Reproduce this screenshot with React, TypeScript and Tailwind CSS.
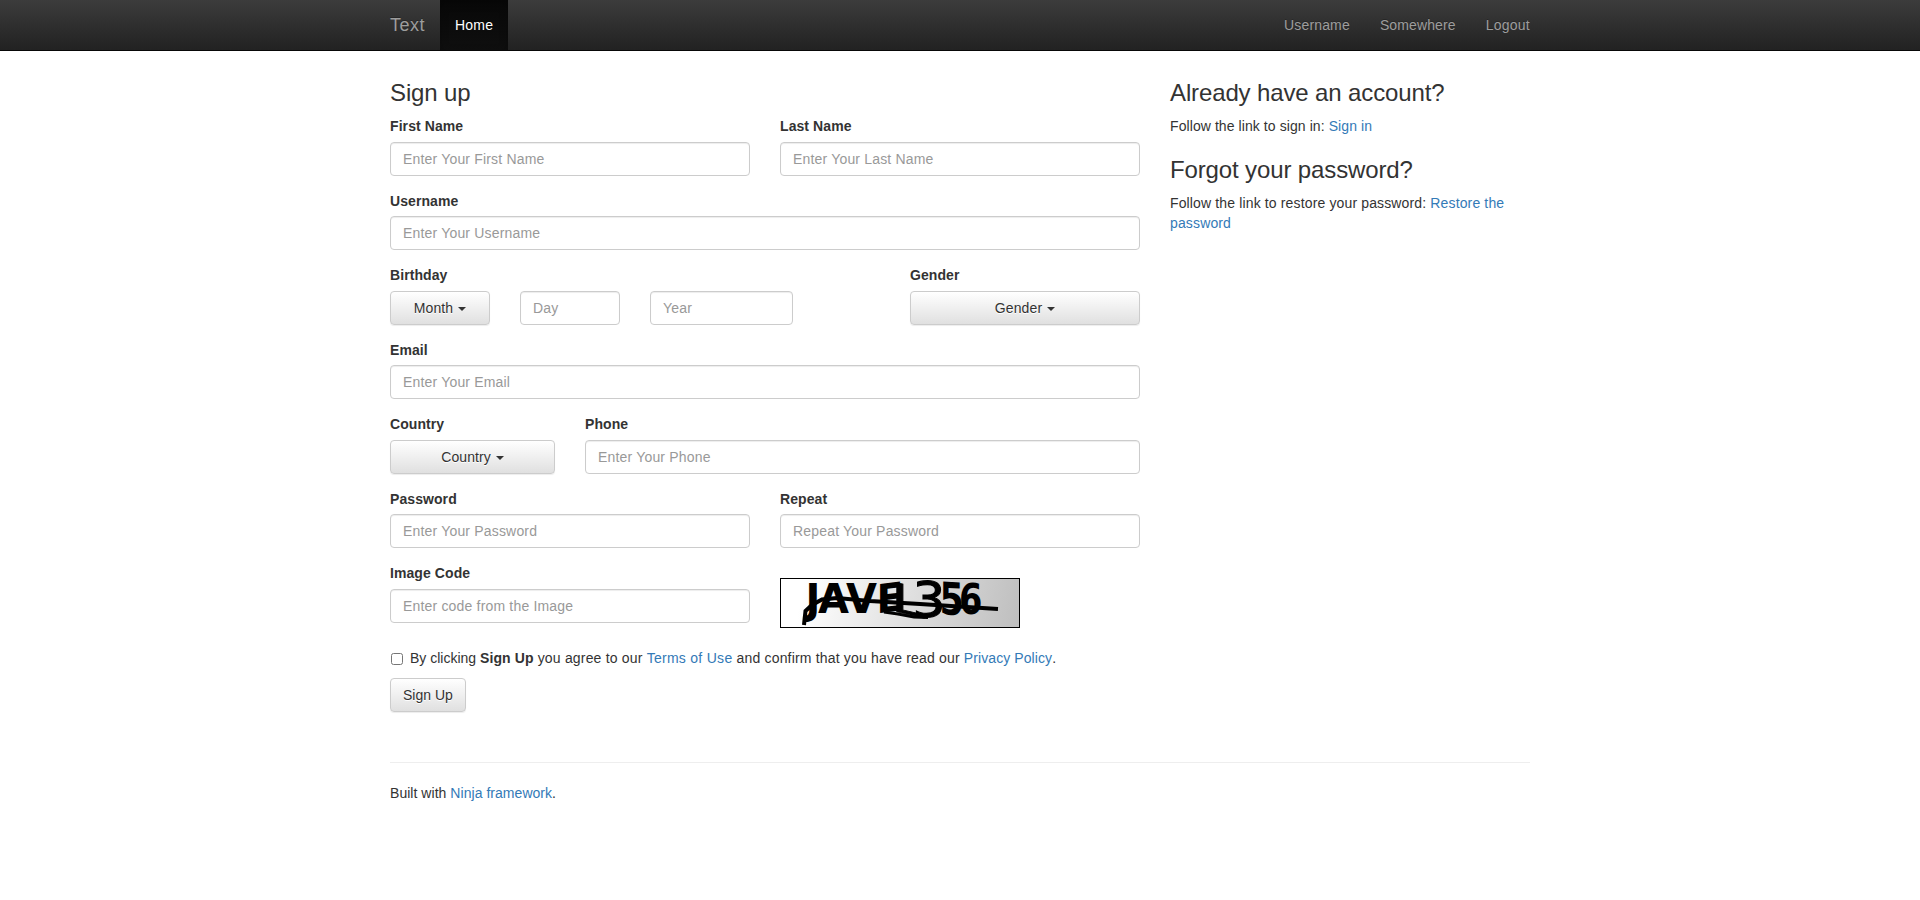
import React from "react";

const links = "text-[#337ab7]";
const heading = "mb-2.5 text-2xl leading-[26.4px] font-medium tracking-[-0.13px]";
const labelStyle = "block h-[25.5px] font-bold tracking-[0.08px]";

function Caret() {
  return (
    <span className="ml-[5px] inline-block h-0 w-0 border-x-4 border-t-4 border-x-transparent border-t-[#333] align-middle" />
  );
}

function Field({ label, placeholder, className = "" }: { label: string; placeholder: string; className?: string }) {
  return (
    <div className={className}>
      <label className={labelStyle}>{label}</label>
      <TextInput placeholder={placeholder} />
    </div>
  );
}

function TextInput({ placeholder }: { placeholder: string }) {
  return (
    <input
      placeholder={placeholder}
      className="block h-[34px] w-full rounded border border-[#ccc] bg-white px-3 py-1.5 leading-5 tracking-[0.18px] shadow-[inset_0_1px_1px_rgba(0,0,0,0.075)] placeholder:text-[#999]"
    />
  );
}

function Button({ children, className = "" }: { children: React.ReactNode; className?: string }) {
  return (
    <button
      className={
        "block h-[34px] rounded border border-[#ccc] bg-linear-to-b from-white to-[#e0e0e0] px-3 py-1.5 text-center leading-5 shadow-[inset_0_1px_0_rgba(255,255,255,0.15),0_1px_1px_rgba(0,0,0,0.075)] [text-shadow:0_1px_0_#fff] " +
        className
      }
    >
      {children}
    </button>
  );
}

function Captcha() {
  return (
    <svg width="240" height="50" viewBox="0 0 240 50" className="block overflow-visible">
      <defs>
        <linearGradient id="shade" x1="0" y1="0" x2="240" y2="50" gradientUnits="userSpaceOnUse">
          <stop offset="0.1" stopColor="#fff" />
          <stop offset="1" stopColor="#bebebe" />
        </linearGradient>
      </defs>
      <rect x="0.5" y="0.5" width="239" height="49" fill="url(#shade)" stroke="#000" />
      <g fontFamily="'DejaVu Sans', sans-serif" fontWeight="700" fontSize="40" fill="#000">
        <text transform="translate(25.5 35)">J</text>
        <text transform="translate(38 35)">A</text>
        <text transform="translate(66 35)">V</text>
        <text transform="translate(96.5 35.5) skewY(-7) scale(.98 1)">E</text>
        <text transform="translate(111 32.5) skewY(13) scale(1.5 1)" fontWeight="400" stroke="#000" strokeWidth="0.8">L</text>
        <text transform="translate(132.5 38.6) scale(1.3 1.24)" fontWeight="400" stroke="#000" strokeWidth="0.9">3</text>
        <text transform="translate(159.5 36) skewY(3) scale(.88 1.12)">5</text>
        <text transform="translate(179 35.5) scale(.84 1.05)">6</text>
      </g>
      <g fill="none" stroke="#000">
        <path d="M24 47 L25.5 33 L32 27 L42 21.5 L57 20 L90 23 L140 26 L218 31" strokeWidth="4" />
        <path d="M25 40 Q29 43 34 36" strokeWidth="4" />
        <path d="M104 34 L118 36 L134 39 L148 39.5" strokeWidth="3" />
      </g>
    </svg>
  );
}

export default function App() {
  return (
    <div className="min-h-[900px] bg-white font-['Liberation_Sans',Arial,sans-serif] text-sm leading-5 text-[#333]">
      <nav className="h-[51px] border-b border-[#080808] bg-linear-to-b from-[#3c3c3c] to-[#222] text-[#9d9d9d] [text-shadow:0_-1px_0_rgba(0,0,0,0.25)]">
        <div className="mx-auto flex h-[50px] w-[1140px] items-center">
          <a className="w-[50px] text-lg leading-5 tracking-[0.5px]">Text</a>
          <a className="h-full w-[68px] bg-linear-to-b from-[#080808] to-[#0f0f0f] px-[15px] py-[15px] tracking-[0.2px] text-white shadow-[inset_0_3px_9px_rgba(0,0,0,0.25)]">
            Home
          </a>
          <div className="ml-auto flex gap-[30px]">
            <a className="tracking-[0.15px]">Username</a>
            <a className="tracking-[0.12px]">Somewhere</a>
            <a className="tracking-[0.25px]">Logout</a>
          </div>
        </div>
      </nav>

      <div className="mx-auto w-[1140px] pt-[29px]">
        <div className="flex gap-[30px]">
          <main className="w-[750px]">
            <h3 className={heading}>Sign up</h3>
            <form className="flex flex-col gap-[15px]">
              <div className="grid grid-cols-2 gap-[30px]">
                <Field label="First Name" placeholder="Enter Your First Name" />
                <Field label="Last Name" placeholder="Enter Your Last Name" />
              </div>
              <Field label="Username" placeholder="Enter Your Username" />
              <div className="flex justify-between">
                <div>
                  <label className={labelStyle}>Birthday</label>
                  <div className="flex gap-[30px]">
                    <Button className="w-[100px] tracking-[0.1px]">Month<Caret /></Button>
                    <div className="w-[100px]"><TextInput placeholder="Day" /></div>
                    <div className="w-[143.33px]"><TextInput placeholder="Year" /></div>
                  </div>
                </div>
                <div className="w-[230px]">
                  <label className={labelStyle}>Gender</label>
                  <Button className="w-full tracking-[0.1px]">Gender<Caret /></Button>
                </div>
              </div>
              <Field label="Email" placeholder="Enter Your Email" />
              <div className="flex gap-[30px]">
                <div className="w-[165px]">
                  <label className={labelStyle}>Country</label>
                  <Button className="w-full tracking-[0.05px]">Country<Caret /></Button>
                </div>
                <Field label="Phone" placeholder="Enter Your Phone" className="flex-1" />
              </div>
              <div className="grid grid-cols-2 gap-[30px]">
                <Field label="Password" placeholder="Enter Your Password" />
                <Field label="Repeat" placeholder="Repeat Your Password" />
              </div>
              <div className="grid h-[70px] grid-cols-2 gap-[30px]">
                <Field label="Image Code" placeholder="Enter code from the Image" />
                <div className="pt-[14.6px]"><Captcha /></div>
              </div>
              <div>
                <label className="flex h-5 items-center">
                  <input type="checkbox" className="mt-0.5 mr-[7px] ml-px h-3 w-3" />
                  <span className="tracking-[0.18px]">
                    <span className="tracking-normal">By clicking <b className="tracking-[0.1px]">Sign Up</b></span> you agree to our{" "}
                    <a className="tracking-[0.28px] text-[#337ab7]">Terms of Use</a> and confirm that you have read our{" "}
                    <a className="tracking-[0.08px] text-[#337ab7]">Privacy Policy</a>.
                  </span>
                </label>
                <Button className="mt-2.5">Sign Up</Button>
              </div>
            </form>
          </main>
          <aside className="w-[360px]">
            <h3 className={heading}>Already have an account?</h3>
            <p className="tracking-[0.08px]">Follow the link to sign in: <a className={links}>Sign in</a></p>
            <div className="pt-[20.6px]">
              <h3 className={heading}>Forgot your password?</h3>
            </div>
            <p className="-mt-[0.6px] tracking-[0.14px]">
              Follow the link to restore your password: <a className={links}>Restore the password</a>
            </p>
          </aside>
        </div>
        <footer className="mt-[50px] border-t border-[#eee] pt-5 tracking-[0.04px]">
          Built with <a className={links}>Ninja framework</a>.
        </footer>
      </div>
    </div>
  );
}
